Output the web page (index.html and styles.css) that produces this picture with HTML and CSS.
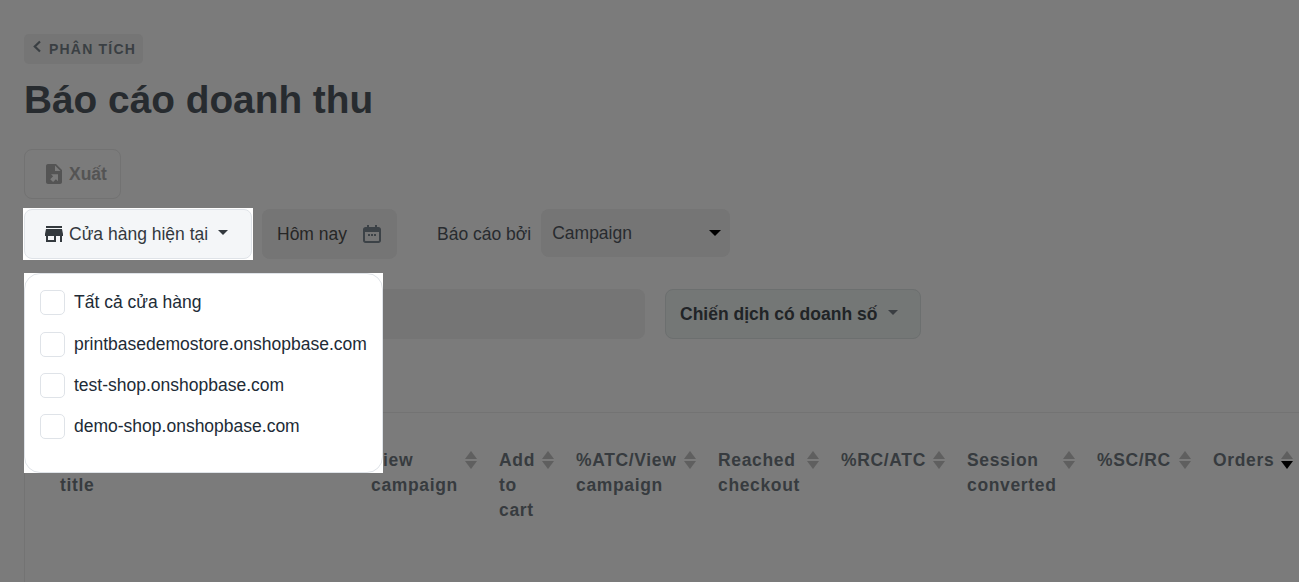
FILE: index.html
```html
<!DOCTYPE html>
<html lang="vi">
<head>
  <meta charset="UTF-8" />
  <title>Báo cáo doanh thu</title>
  <link rel="stylesheet" href="styles.css">
</head>
<body>
  <main class="page">
    <a class="back-link" href="#">
      <svg class="back-icon" viewBox="0 0 10 14"><path d="M8 1.500 2.800 6.500 8 11.500" fill="none" stroke="currentColor" stroke-width="2.200"/></svg>
      PHÂN TÍCH
    </a>
    <h1>Báo cáo doanh thu</h1>

    <button class="btn-export" type="button">
      <svg class="icon" viewBox="0 0 24 24"><path d="M6 2C4.900 2 4 2.900 4 4v16c0 1.100.9 2 2 2h12c1.100 0 2-.9 2-2V8l-6-6H6zm7 1.500L18.500 9H13V3.500zM9 12.200h7v7.100l-2.100-2.100-2.800 2.800-2.900-2.800 2.900-2.900L9 12.200z" fill="currentColor"/></svg>
      Xuất
    </button>

    <div class="filter-row">
      <div class="store-filter">
        <button class="btn-store" type="button">
          <svg class="icon" viewBox="0 0 24 24"><path d="M20 4H4v2h16V4zm1 10v-2l-1-5H4l-1 5v2h1v6h10v-6h4v6h2v-6h1zm-9 4H6v-4h6v4z" fill="currentColor"/></svg>
          Cửa hàng hiện tại
          <span class="caret"></span>
        </button>
      </div>
      <div class="date-field">
        Hôm nay
        <svg class="icon-cal" viewBox="0 0 20 20"><path d="M5 1h2v2h6V1h2v2h1.500C17.900 3 19 4.100 19 5.500v11c0 1.400-1.100 2.500-2.500 2.500h-13C2.100 19 1 17.900 1 16.500v-11C1 4.100 2.100 3 3.500 3H5V1zM3 8v8.500c0 .3.200.5.500.5h13c.3 0 .5-.2.500-.5V8H3zm3 2h2v2H6v-2zm3 0h2v2H9v-2zm3 0h2v2h-2v-2z" fill="currentColor"/></svg>
      </div>
      <label class="report-label">Báo cáo bởi</label>
      <div class="select-field">
        Campaign
        <span class="select-arrow"></span>
      </div>
    </div>

    <div class="search-row">
      <div class="search-field"></div>
      <button class="btn-campaign" type="button">
        Chiến dịch có doanh số
        <span class="caret"></span>
      </button>
    </div>

    <div class="store-menu">
      <div class="store-menu-inner">
        <label class="store-option"><span class="checkbox"></span>Tất cả cửa hàng</label>
        <label class="store-option"><span class="checkbox"></span>printbasedemostore.onshopbase.com</label>
        <label class="store-option"><span class="checkbox"></span>test-shop.onshopbase.com</label>
        <label class="store-option"><span class="checkbox"></span>demo-shop.onshopbase.com</label>
      </div>
    </div>

    <div class="report-table">
      <div class="th col-title">Campaign title</div>
      <div class="th"><span>View campaign</span><i class="sort"></i></div>
      <div class="th"><span>Add to cart</span><i class="sort"></i></div>
      <div class="th"><span>%ATC/View campaign</span><i class="sort"></i></div>
      <div class="th"><span>Reached checkout</span><i class="sort"></i></div>
      <div class="th"><span>%RC/ATC</span><i class="sort"></i></div>
      <div class="th"><span>Session converted</span><i class="sort"></i></div>
      <div class="th"><span>%SC/RC</span><i class="sort"></i></div>
      <div class="th"><span>Orders</span><i class="sort sort-active"></i></div>
    </div>
  </main>
</body>
</html>
```

FILE: styles.css
```css
html, body {
  margin: 0;
  padding: 0;
  height: 100%;
  overflow: hidden;
  background: #7b7b7b;
  font-family: "Liberation Sans", Arial, sans-serif;
  color: #2b2f33;
}
.page {
  position: relative;
  height: 100%;
  box-sizing: border-box;
  padding: 34px 0 0 24px;
  overflow: hidden;
}
.back-link {
  display: flex;
  align-items: center;
  gap: 7px;
  width: 119px;
  height: 30px;
  box-sizing: border-box;
  padding-left: 8px;
  background: #757575;
  border-radius: 5px;
  color: #3a3f43;
  font-size: 14px;
  font-weight: 700;
  letter-spacing: 1.2px;
  text-decoration: none;
}
.back-icon {
  width: 10px;
  height: 14px;
  margin-top: -5px;
}
h1 {
  margin: 12px 0 0;
  height: 47px;
  line-height: 47px;
  font-size: 38.800px;
  font-weight: 700;
  color: #272b2f;
}
.btn-export {
  display: flex;
  align-items: center;
  gap: 3px;
  margin-top: 26px;
  width: 97px;
  height: 50px;
  padding: 0 0 0 17px;
  background: transparent;
  border: 1px solid #727272;
  border-radius: 8px;
  font: 700 17.500px "Liberation Sans", Arial, sans-serif;
  color: #545454;
}
.icon {
  width: 24px;
  height: 24px;
  flex: none;
}
.filter-row {
  display: flex;
  align-items: flex-start;
  margin-top: 10px;
  font-size: 17.500px;
}
.store-filter {
  position: relative;
  z-index: 2;
  margin: -1px 0 0 -1px;
  padding: 1px;
  background: #fff;
}
.btn-store {
  display: flex;
  align-items: center;
  width: 228px;
  height: 50px;
  padding: 0 0 0 17px;
  gap: 3px;
  background: #f4f6f8;
  border: 1px solid #dfe3e8;
  border-radius: 8px;
  font: 17.500px "Liberation Sans", Arial, sans-serif;
  color: #33393e;
}
.caret {
  width: 0;
  height: 0;
  margin: -3px 0 0 7px;
  border-left: 5px solid transparent;
  border-right: 5px solid transparent;
  border-top: 5px solid currentColor;
}
.date-field {
  display: flex;
  align-items: center;
  justify-content: space-between;
  box-sizing: border-box;
  width: 135px;
  height: 50px;
  margin-left: 9px;
  padding: 0 15px;
  background: #757575;
  border-radius: 8px;
  color: #262626;
}
.icon-cal {
  width: 20px;
  height: 20px;
  color: #3c4247;
}
.report-label {
  margin-left: 40px;
  line-height: 50px;
  color: #282b2f;
}
.select-field {
  display: flex;
  align-items: center;
  justify-content: space-between;
  box-sizing: border-box;
  width: 189px;
  height: 48px;
  margin-left: 10px;
  padding: 0 9px 0 11px;
  background: #757575;
  border-radius: 8px;
  color: #282b2f;
}
.select-arrow {
  width: 0;
  height: 0;
  border-left: 6px solid transparent;
  border-right: 6px solid transparent;
  border-top: 6px solid #000;
}
.search-row {
  display: flex;
  gap: 20px;
  margin-top: 29px;
}
.search-field {
  width: 621px;
  height: 50px;
  background: #757575;
  border-radius: 8px;
}
.btn-campaign {
  display: flex;
  align-items: center;
  box-sizing: border-box;
  width: 256px;
  height: 50px;
  padding: 0 0 0 14px;
  background: #747776;
  border: 1px solid #6c6f6f;
  border-radius: 8px;
  font: 700 17.500px "Liberation Sans", Arial, sans-serif;
  color: #212427;
}
.btn-campaign .caret {
  margin-left: 11px;
  color: #3a3e42;
}
.store-menu {
  position: absolute;
  z-index: 2;
  left: 24px;
  top: 273px;
  width: 359px;
  height: 200px;
  background: #fff;
}
.store-menu-inner {
  box-sizing: border-box;
  height: 100%;
  padding: 16.200px 15px 0;
  background: #fff;
  border: 1px solid #dfe3e8;
  border-radius: 16px;
}
.store-option {
  display: flex;
  align-items: center;
  gap: 9px;
  height: 25px;
  margin-bottom: 16.400px;
  font-size: 17.500px;
  color: #212b36;
  white-space: nowrap;
}
.checkbox {
  flex: none;
  box-sizing: border-box;
  width: 25px;
  height: 25px;
  border: 1px solid #dfe3e8;
  border-radius: 5px;
  background: #fff;
}
.report-table {
  display: grid;
  grid-template-columns: 346px 128px 77px 142px 123px 126px 130px 116px 80px;
  margin-top: 73px;
  padding-top: 35px;
  height: 200px;
  border-top: 1px solid #737373;
  border-left: 1px solid #737373;
  font-size: 17.500px;
  font-weight: 700;
  line-height: 25px;
  letter-spacing: 0.650px;
  color: #373b3f;
}
.th {
  display: flex;
  align-items: flex-start;
  justify-content: space-between;
  padding-right: 22.500px;
}
.th:last-child {
  padding-right: 0;
}
.col-title {
  display: block;
  padding-left: 35px;
  padding-right: 200px;
}
.sort {
  position: relative;
  flex: none;
  width: 12px;
  height: 18px;
  margin-top: 3px;
}
.sort::before,
.sort::after {
  content: '';
  position: absolute;
  left: 0;
  border-left: 6px solid transparent;
  border-right: 6px solid transparent;
}
.sort::before {
  top: 0;
  border-bottom: 8px solid #5f5f5f;
}
.sort::after {
  bottom: 0;
  border-top: 8px solid #5f5f5f;
}
.sort-active::after {
  border-top-color: #000;
}
```
